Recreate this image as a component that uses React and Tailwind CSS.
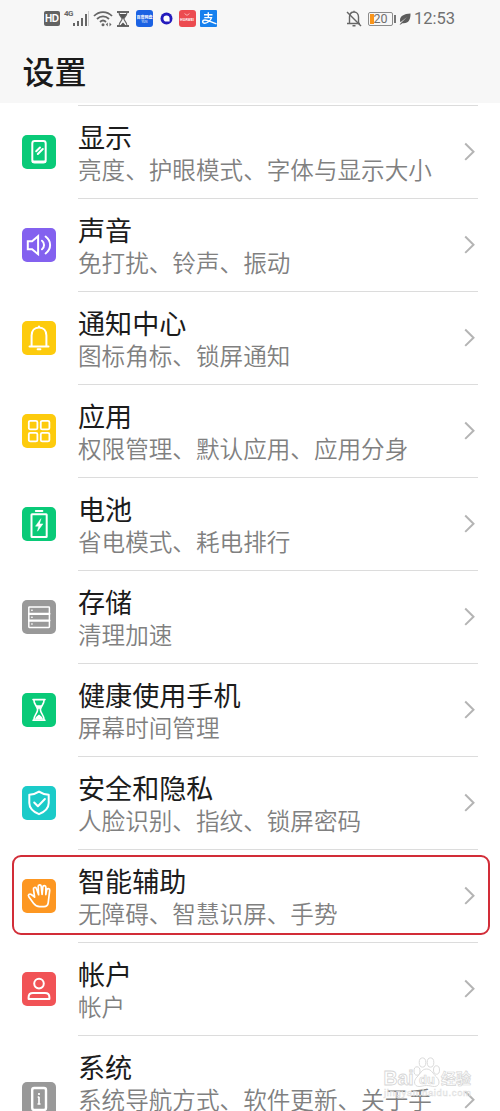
import React from "react";

function Glyph({ children, w = 2 }) {
  return (
    <svg viewBox="0 0 34 34" className="block size-full" fill="none" stroke="#fff" strokeWidth={w} strokeLinecap="round" strokeLinejoin="round">
      {children}
    </svg>
  );
}

const icons = {
  display: (
    <Glyph>
      <rect x="10.3" y="6" width="13.4" height="21.5" rx="2.4" />
      <path d="M11 26.8h12" strokeWidth="2.6" />
      <path d="M14.2 16.3l3.8-3.8M15.8 19l5-5" />
    </Glyph>
  ),
  sound: (
    <Glyph>
      <path d="M5.800 13.200h4.300l6-5v18l-6-5H5.800z" strokeLinejoin="miter" />
      <path d="M20 12.700c2.700 2 2.700 6.600 0 8.600M23.600 8.500c6 4.600 6 12.400 0 17" />
    </Glyph>
  ),
  bell: (
    <Glyph>
      <path d="M7.5 25.5h19M9.6 25.500V14.400c0-4.700 3-8 7.400-8s7.400 3.300 7.400 8v11.100M17 6V5.500" />
      <path d="M15.600 28.300h2.800" strokeWidth="2" />
    </Glyph>
  ),
  apps: (
    <Glyph w={1.800}>
      <rect x="6.8" y="6.8" width="8.6" height="8.6" rx="1.5" />
      <rect x="18.8" y="6.8" width="8.6" height="8.6" rx="1.5" />
      <rect x="6.8" y="18.8" width="8.6" height="8.6" rx="1.5" />
      <rect x="18.8" y="18.8" width="8.6" height="8.6" rx="1.5" />
    </Glyph>
  ),
  battery: (
    <Glyph>
      <rect x="9.5" y="7.2" width="15.2" height="22.8" rx="0.5" />
      <path d="M13.800 4h6.600" strokeWidth="2" />
      <path d="M18.700 12l-5.200 7.200h3.200l-1.200 5 5.400-7.300h-3.200z" fill="#fff" stroke="#fff" strokeWidth="0.500" />
    </Glyph>
  ),
  storage: (
    <Glyph w={1.5}>
      <rect x="6.8" y="7" width="20.6" height="20.4" rx="0.6" />
      <path d="M7 13.8h20.4M7 20.6h20.4" strokeWidth="2.2" />
      <path d="M9.8 10.3h.3M9.8 17.2h.3M9.8 24h.3" />
    </Glyph>
  ),
  hourglass: (
    <Glyph w={1.6}>
      <path d="M11 6.600h12M11 27.300h12M11.800 6.600c0 5.300 3.800 6.600 3.800 10.200s-3.800 5-3.800 10.500M22.200 6.600c0 5.300-3.800 6.600-3.800 10.200s3.800 5 3.800 10.500" />
      <path d="M13.2 12.3h7.6L17 16.500zM12.800 26.800c.6-3 2.600-4 4.200-5.200 1.600 1.200 3.600 2.200 4.200 5.200z" fill="#fff" stroke="none" />
    </Glyph>
  ),
  shield: (
    <Glyph>
      <path d="M17 5.600c3 2 6 3 9.700 3.200v8.200c0 5.400-4 8.800-9.700 11.200-5.700-2.400-9.700-5.800-9.700-11.200V8.800C11 8.600 14 7.600 17 5.600z" />
      <path d="M12.200 16.500l3.700 3.700 7-7.200" />
    </Glyph>
  ),
  hand: (
    <Glyph w={1.7}>
      <path d="M12.600 18.200L9.300 15.500c-1.700-1.300-3.700.5-2.500 2.200l4.700 6.600c1.500 2.100 3.500 3.300 6.100 3.300h4.400c2.700 0 3.900-1.400 4.200-3.700l1.500-12.500c.2-2-2.600-2.400-3-.5l-.9 4.700.1-7.300c0-2.100-2.900-2.200-3.100-.2l-.7 7.300-.9-8.100c-.2-2-3.100-1.800-3 .2l.4 8.200-2.200-6.200c-.6-1.900-3.400-1.100-2.900.9z" />
    </Glyph>
  ),
  account: (
    <Glyph>
      <circle cx="17" cy="11.600" r="4.800" />
      <path d="M6.600 27v-1.800c0-2.600 1.700-4.200 4.400-4.200h12c2.700 0 4.400 1.600 4.400 4.200V27z" />
    </Glyph>
  ),
  system: (
    <Glyph>
      <rect x="10.200" y="6" width="13.800" height="22" rx="2" strokeWidth="2.400" />
      <path d="M17 11v2M17 14.700v7.500M15.700 15.200H17M15.500 22h3" strokeWidth="1.700" strokeLinecap="butt" />
    </Glyph>
  ),
};

const rows = [
  { icon: "display", bg: "bg-[#09ca78]", title: "显示", sub: "亮度、护眼模式、字体与显示大小" },
  { icon: "sound", bg: "bg-[#8361ef]", title: "声音", sub: "免打扰、铃声、振动" },
  { icon: "bell", bg: "bg-[#fdcb0d]", title: "通知中心", sub: "图标角标、锁屏通知" },
  { icon: "apps", bg: "bg-[#fdcb0d]", title: "应用", sub: "权限管理、默认应用、应用分身" },
  { icon: "battery", bg: "bg-[#09ca78]", title: "电池", sub: "省电模式、耗电排行" },
  { icon: "storage", bg: "bg-[#999999]", title: "存储", sub: "清理加速" },
  { icon: "hourglass", bg: "bg-[#09ca78]", title: "健康使用手机", sub: "屏幕时间管理" },
  { icon: "shield", bg: "bg-[#1bcbc9]", title: "安全和隐私", sub: "人脸识别、指纹、锁屏密码" },
  { icon: "hand", bg: "bg-[#fd9722]", title: "智能辅助", sub: "无障碍、智慧识屏、手势", marked: true },
  { icon: "account", bg: "bg-[#f15356]", title: "帐户", sub: "帐户" },
  { icon: "system", bg: "bg-[#999999]", title: "系统", sub: "系统导航方式、软件更新、关于手", tall: true },
];

function Row({ icon, bg, title, sub, marked, tall }) {
  return (
    <div className={`relative flex shrink-0 pl-[22px] pr-[22px] ${tall ? "h-[127px]" : "h-[93px]"}`}>
      <div className={`size-[34px] shrink-0 overflow-hidden rounded-[5px] ${tall ? "mt-[47px]" : "mt-[29.500px]"} ${bg}`}>{icons[icon]}</div>
      <div className="ml-[22px] flex min-w-0 flex-1 border-t border-[#dcdcdc]">
        <div className="flex flex-1 flex-col whitespace-nowrap pt-[14px]">
          <div className="h-[33px] text-[27.100px] leading-[33px] text-[#1c1c1c]">{title}</div>
          <div className="h-[33px] text-[23.600px] font-[350] leading-[33px] text-[#808080]">{sub}</div>
        </div>
        <svg viewBox="0 0 12 20" className={`h-5 w-3 shrink-0 ${tall ? "mt-[54px]" : "mt-[36px]"} mr-[2px]`} fill="none" stroke="#b4b4b4" strokeWidth="2">
          <path d="M1.200 1.500L9.500 9.700l-8.300 8.200" />
        </svg>
      </div>
      {marked && <div className="absolute left-[12px] top-[6px] h-[80px] w-[478px] rounded-[9px] border-2 border-[#d22d38]" />}
    </div>
  );
}

function StatusBar() {
  return (
    <div className="flex h-[37px] shrink-0 items-center pl-[44px] pr-[44px]">
      <div className="flex h-[15px] w-[15.500px] items-center justify-center rounded-[2px] bg-[#626262] text-[10px] font-bold leading-none tracking-[-0.500px] text-white font-['Liberation_Sans',sans-serif]">HD</div>
      <div className="ml-[4.500px] h-[18px] w-[8px] text-[8px] font-bold leading-[8px] tracking-[-0.500px] text-[#666] font-['Roboto',sans-serif]">4G</div>
      <svg viewBox="0 0 17 17" className="h-[17px] w-[17px]" stroke="#666" strokeWidth="2">
        <path d="M2 16v-3M6 16v-5M10 16V8M14 16V4" />
        <path d="M16.500 16V1" stroke="#cfcfcf" strokeWidth="1" />
      </svg>
      <svg viewBox="0 0 20 17" className="ml-[4px] h-[17px] w-[20px]" fill="none" stroke="#666" strokeWidth="1.800">
        <path d="M1 6c5-5.300 13-5.300 18 0M4 9c3.500-3.500 8.500-3.500 12 0M7 12c2-2 4-2 6 0" />
        <circle cx="10" cy="14.700" r="1.500" fill="#666" stroke="none" />
        <path d="M12.800 14.500l2-2v4zM18.500 14.500l-2-2v4z" fill="#666" stroke="none" />
      </svg>
      <svg viewBox="0 0 12 16" className="ml-[4px] h-4 w-3" fill="none" stroke="#666" strokeWidth="1.200">
        <path d="M0 1h12M0 15h12" strokeWidth="1.800" />
        <path d="M2 1c0 4.500 3 5 3 7s-3 2.500-3 7M10 1c0 4.500-3 5-3 7s3 2.500 3 7" />
        <path d="M2.300 3h7.400L6 8.500zM3.500 15c.5-2 1.500-2.500 2.500-3.500 1 1 2 1.500 2.500 3.500z" fill="#555" stroke="none" />
      </svg>
      <div className="ml-[7px] flex h-[17px] w-[17px] flex-col items-center justify-center overflow-hidden rounded-[3px] bg-[#1b62e3] text-white">
        <span className="whitespace-nowrap text-[4px] font-bold leading-[6px]">百度网盘</span>
        <span className="text-[3px] leading-[4px]">YUN</span>
      </div>
      <svg viewBox="0 0 13 13" className="ml-[6.500px] size-[13px]">
        <circle cx="6.500" cy="6.500" r="6" fill="#241bbd" />
        <path d="M6.500 3.400a3.100 3.100 0 1 0 0 6.200h3.100V6.500a3.100 3.100 0 0 0-3.100-3.100z" fill="#fff" />
      </svg>
      <div className="ml-[6px] flex h-[17px] w-[17px] flex-col items-center rounded-[3px] bg-[#ec4b50] pt-[3px]">
        <svg viewBox="0 0 8 4" className="h-[3px] w-[6px]" fill="none" stroke="#ffd8d8" strokeWidth="1">
          <path d="M1 .5c1 3 5 3 6 0" />
        </svg>
        <span className="mt-[1px] text-[3.500px] font-bold leading-[5px] text-white">HUAWEI</span>
      </div>
      <svg viewBox="0 0 17 17" className="ml-[4px] size-[17px]">
        <rect width="17" height="17" rx="1" fill="#1680ee" />
        <path d="M4 4.800h8.500M8.300 2.300v5.200M4.300 7.600h7.200c-.8 3-4.200 5.600-6.700 5.600-3 0-2.700-3.200.2-3.200 3.200 0 6 2.200 11.500 3.800" fill="none" stroke="#fff" strokeWidth="1.400" />
      </svg>

      <svg viewBox="0 0 16 17" className="ml-auto h-[17px] w-[16px]" fill="none" stroke="#666" strokeWidth="1.400">
        <path d="M3.500 13V7c0-2.800 1.700-5 4.500-5s4.500 2.200 4.500 5v6M1 13.500h13M6.500 15.700h3M8 2V.7" />
        <path d="M1 2l14 14" />
      </svg>
      <div className="relative ml-[6px] flex h-[14px] w-[25px] items-center justify-center rounded-[2px] border border-[#8c8c8c]">
        <div className="absolute left-[1px] top-[1px] h-[10px] w-[4px] bg-[#f99519]" />
        <span className="relative text-[12.500px] leading-[14px] text-[#707070] font-['Roboto',sans-serif]">20</span>
      </div>
      <div className="ml-[1px] h-[8px] w-[2px] bg-[#777]" />
      <svg viewBox="0 0 12 12" className="ml-[3px] size-[12px]">
        <path d="M11.500.5C5 .8 1 3 1 7.200c0 .8.200 1.500.5 2L8 4 2.700 9.300l-2.200 2.200h1.300l1.500-1.300C9.500 11 11.700 6.500 11.500.5z" fill="#5c5c5c" />
      </svg>
      <span className="ml-[3px] w-[42px] whitespace-nowrap pt-[2px] text-[16.500px] leading-none text-[#707070] font-['Roboto',sans-serif]">12:53</span>
    </div>
  );
}

function Watermark() {
  return (
    <div className="absolute left-[383px] top-[1056px] h-[46px] w-[94px]">
      <svg viewBox="0 0 94 46" className="block size-full" fill="#fff" fillOpacity="0.600" stroke="#d6d6d6" strokeWidth="0.900">
        <text x="0.500" y="28.500" fontFamily="Liberation Sans" fontWeight="700" fontSize="20.500" textLength="30" lengthAdjust="spacingAndGlyphs">Bai</text>
        <ellipse cx="34" cy="15" rx="3" ry="4.200" />
        <ellipse cx="39.500" cy="6.500" rx="3.300" ry="4.600" />
        <ellipse cx="47.500" cy="6.500" rx="3.300" ry="4.600" />
        <ellipse cx="53.500" cy="14" rx="3" ry="4.200" />
        <path d="M43.500 13c-5 0-6 5-9.500 8-4 4-3 9.500 2 9.500 3 0 4-1 7.500-1s5 1 8 1c5 0 6-5.500 2-9.500-3.500-3-5-8-10-8z" />
        <text x="36" y="28" fontFamily="Liberation Sans" fontWeight="700" fontSize="13" strokeWidth="0.700">du</text>
        <text x="58" y="27.500" fontFamily="Noto Sans CJK SC" fontWeight="700" fontSize="15" strokeWidth="0.700">经验</text>
        <text x="1" y="40" fontFamily="Liberation Sans" fontSize="9.500" textLength="87" fillOpacity="0.300" stroke="#dddddd" strokeWidth="0.500">jingyan.baidu.com</text>
      </svg>
    </div>
  );
}

export default function App() {
  return (
    <div className="relative flex h-[1111px] w-[500px] flex-col overflow-hidden bg-white font-['Noto_Sans_CJK_SC',sans-serif]">
      <header className="h-[103px] shrink-0 bg-[#f7f7f7]">
        <StatusBar />
        <h1 className="pl-[22.500px] text-[32px] font-medium leading-[66px] text-[#1a1a1a]">设置</h1>
      </header>
      <main className="flex flex-col pt-[2px]">
        {rows.map((r) => (
          <Row key={r.title} {...r} />
        ))}
      </main>
      <Watermark />
    </div>
  );
}
